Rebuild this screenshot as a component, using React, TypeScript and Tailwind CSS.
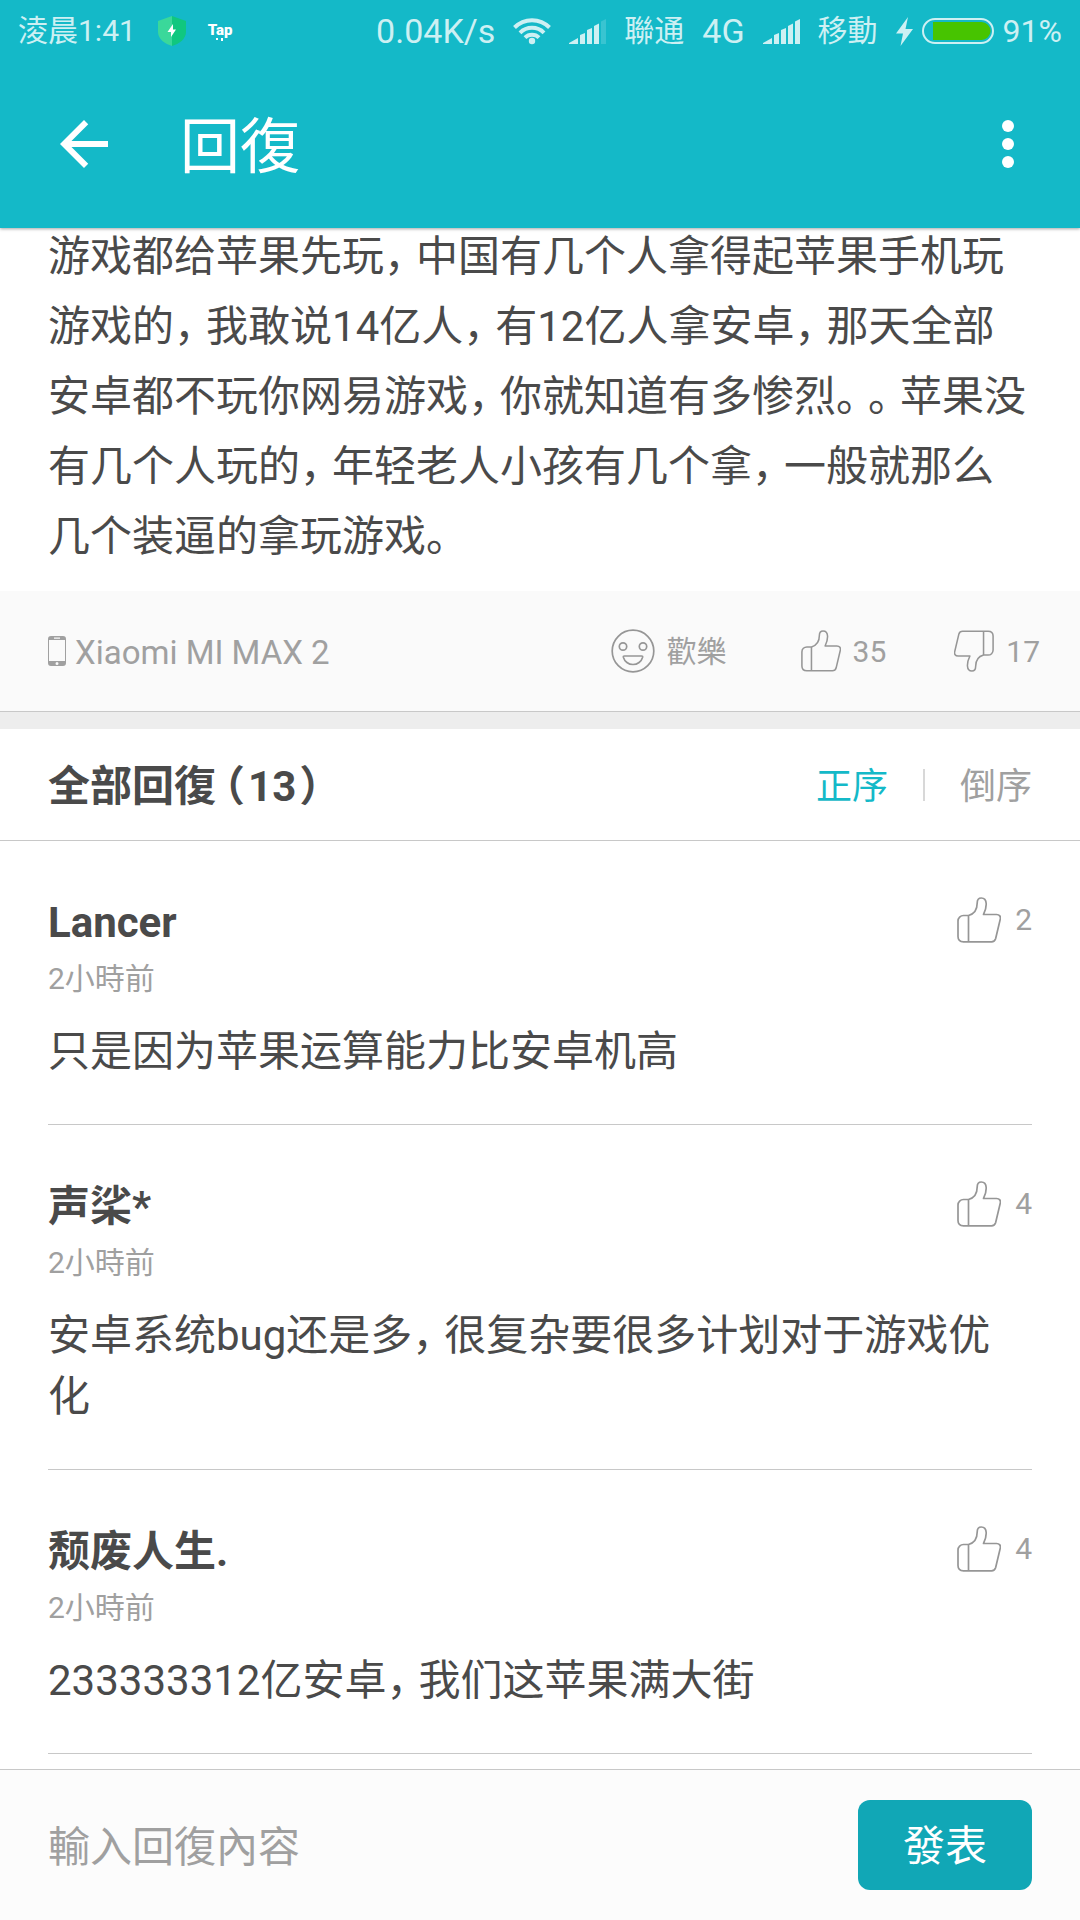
import type { ReactNode } from 'react';

const BODY_FONT = "font-['Roboto','Noto_Sans_CJK_SC',sans-serif]";

/** Sets full-width punctuation in a slightly narrower cell. */
function Punctuated({ text }: { text: string }) {
  return (
    <>
      {text.split(/([，。（）])/).map((part, i) => {
        if (part === '，' || part === '。') {
          return (
            <span key={i} className="mr-[11px] [font-feature-settings:'halt']">
              {part}
            </span>
          );
        }
        if (part === '（') {
          return (
            <span key={i} className="mr-[3px] ml-2 [font-feature-settings:'halt']">
              {part}
            </span>
          );
        }
        if (part === '）') {
          return (
            <span key={i} className="ml-[3px] [font-feature-settings:'halt']">
              {part}
            </span>
          );
        }
        return part;
      })}
    </>
  );
}

function ShieldIcon() {
  return (
    <svg viewBox="0 0 28 30" className="h-[30px] w-7" aria-hidden="true">
      <path d="M14 0 28 5V16C28 23 21 28 14 30Z" fill="#10c77f" />
      <path d="M14 0 0 5V16C0 23 7 28 14 30Z" fill="#3ad89a" />
      <path d="M15 8 9.5 16H13V21L18 13.5H15Z" fill="#fff" />
    </svg>
  );
}

function TapIcon() {
  return (
    <span className="flex flex-col items-center text-[15px] leading-4 font-black text-white">
      Tap
      <svg viewBox="0 0 8 3" className="h-[3px] w-2" aria-hidden="true">
        <path d="M0 0H2V2H0ZM5 0H7V3H5Z" fill="#fff" />
      </svg>
    </span>
  );
}

function WifiIcon() {
  return (
    <svg viewBox="0 0 38 28" className="h-7 w-[38px]" fill="none" aria-hidden="true">
      <g stroke="#cdf0f3" strokeWidth="4">
        <path d="M1.5 10.5A24.5 24.5 0 0 1 36.5 10.5" />
        <path d="M7 15.8A17 17 0 0 1 31 15.8" />
        <path d="M12 20.6A10 10 0 0 1 26 20.6" />
      </g>
      <circle cx="19" cy="24" r="3.2" fill="#cdf0f3" />
    </svg>
  );
}

function SignalIcon({ full }: { full: boolean }) {
  return (
    <svg viewBox="0 0 37 25" className="h-[25px] w-[37px]" fill="#cdf0f3" aria-hidden="true">
      <path d="M0 25V24L9 19V25Z" />
      <path d="M11 16 16 14V25H11Z" />
      <path d="M18 11 23 9V25H18Z" />
      <path d="M25 7 30 4.500V25H25Z" />
      <path d="M32 2.500 37 0V25H32Z" opacity={full ? 1 : 0.2} />
    </svg>
  );
}

function BatteryIcon() {
  return (
    <svg viewBox="0 0 72 26" className="h-[26px] w-[72px]" fill="none" aria-hidden="true">
      <rect x="1" y="1" width="70" height="24" rx="12" stroke="#cdf0f3" strokeWidth="2" />
      <path d="M11 4H59.500A9 9 0 0 1 59.500 22H11Z" fill="#47c400" />
    </svg>
  );
}

function BoltIcon() {
  return (
    <svg viewBox="0 0 17 29" className="h-[29px] w-[17px]" fill="#cdf0f3" aria-hidden="true">
      <path d="M12 0 0 16.500H7L4.500 29 17 12H9.500Z" />
    </svg>
  );
}

function ThumbIcon({ className }: { className: string }) {
  return (
    <svg
      viewBox="0 0 44 46"
      className={className}
      fill="none"
      stroke="#969696"
      strokeWidth="1.700"
      strokeLinejoin="round"
      aria-hidden="true"
    >
      <path d="M11.500 18.500H6.500C3.500 18.500 1 20.800 1 24V39.500C1 42.700 3.200 44.800 6.500 44.800H34.500C36.800 44.800 38 43.800 38.600 41.800L43.200 22.500C44 19.500 42.500 17.500 39.500 17.500H26.500C28 14.500 29.400 11 29.200 6.500C29 3 27 1 24.300 1C21.600 1 20.200 3 20.200 6C20.200 12.500 17 17 11.500 18.500Z" />
      <path d="M11.500 18.500V44.800" />
    </svg>
  );
}

function SmileIcon() {
  return (
    <svg
      viewBox="0 0 44 44"
      className="size-11"
      fill="none"
      stroke="#969696"
      strokeWidth="1.700"
      strokeLinejoin="round"
      aria-hidden="true"
    >
      <circle cx="22" cy="22" r="20.800" />
      <circle cx="12" cy="17.500" r="3.700" />
      <circle cx="32" cy="17.500" r="3.700" />
      <path d="M13.500 27H30.500C31.500 27 31.800 27.500 31.600 28.400C30.500 32.500 26.500 35.500 22 35.500S13.500 32.500 12.400 28.400C12.200 27.500 12.500 27 13.500 27Z" />
    </svg>
  );
}

function PhoneIcon() {
  return (
    <svg viewBox="0 0 18 30" className="h-[30px] w-[18px]" aria-hidden="true">
      <path
        fillRule="evenodd"
        fill="#a0a0a0"
        d="M3 0H15A3 3 0 0 1 18 3V27A3 3 0 0 1 15 30H3A3 3 0 0 1 0 27V3A3 3 0 0 1 3 0ZM1 4V25H17V4ZM6 1.500V2.700H12V1.500ZM9 26A1.500 1.500 0 1 0 9 29A1.500 1.500 0 1 0 9 26Z"
      />
    </svg>
  );
}

function StatusBar() {
  return (
    <div className="flex h-15 items-center justify-between px-[18px] pt-0.5 text-[30px] leading-9 text-[#cdf0f3]">
      <div className="flex items-center gap-[22px]">
        <span>淩晨1:41</span>
        <ShieldIcon />
        <TapIcon />
      </div>
      <div className="flex items-center gap-[18px]">
        <span className="text-[34px]">0.04K/s</span>
        <WifiIcon />
        <SignalIcon full={false} />
        <span>聯通</span>
        <span className="text-[34px]">4G</span>
        <SignalIcon full />
        <span>移動</span>
        <span className="flex items-center gap-[9px]">
          <BoltIcon />
          <BatteryIcon />
          <span className="text-[32px]">91%</span>
        </span>
      </div>
    </div>
  );
}

function AppBar() {
  return (
    <div className="flex h-42 items-center px-9">
      <button type="button" aria-label="返回" className="ml-3">
        <svg viewBox="0 0 24 24" className="size-18" fill="#fff" aria-hidden="true">
          <path d="M20 11H7.830l5.590-5.590L12 4l-8 8 8 8 1.410-1.410L7.830 13H20v-2z" />
        </svg>
      </button>
      <h1 className="ml-15 flex-1 pt-2 text-[60px] leading-[72px] font-normal text-white">回復</h1>
      <button type="button" aria-label="更多">
        <svg viewBox="0 0 24 24" className="size-18" fill="#fff" aria-hidden="true">
          <circle cx="12" cy="6" r="2" />
          <circle cx="12" cy="12" r="2" />
          <circle cx="12" cy="18" r="2" />
        </svg>
      </button>
    </div>
  );
}

function MetaButton({ icon, children, label }: { icon: ReactNode; children: ReactNode; label: string }) {
  return (
    <button type="button" aria-label={label} className="flex items-center gap-3 text-[30px] leading-9">
      {icon}
      <span className="pt-0.5">{children}</span>
    </button>
  );
}

type Reply = { name: string; time: string; text: string; likes: number };

const REPLIES: Reply[] = [
  { name: 'Lancer', time: '2小時前', text: '只是因为苹果运算能力比安卓机高', likes: 2 },
  { name: '声桬*', time: '2小時前', text: '安卓系统bug还是多，很复杂要很多计划对于游戏优化', likes: 4 },
  { name: '颓废人生.', time: '2小時前', text: '233333312亿安卓，我们这苹果满大街', likes: 4 },
];

function ReplyItem({ reply }: { reply: Reply }) {
  return (
    <li className="border-b border-[#c8c8c8] pt-[54px] pb-[42px]">
      <div className="flex items-start justify-between">
        <h3 className="text-[42px] leading-14 font-bold">{reply.name}</h3>
        <button
          type="button"
          aria-label="讚"
          className="mt-0.5 flex items-center gap-[14px] text-[30px] leading-9 text-[#a0a0a0]"
        >
          <ThumbIcon className="h-[46px] w-11" />
          {reply.likes}
        </button>
      </div>
      <p className="mt-[10px] text-[30px] leading-9 text-[#a0a0a0]">{reply.time}</p>
      <p className="mt-6 text-[42px] leading-[61px]">
        <Punctuated text={reply.text} />
      </p>
    </li>
  );
}

export default function App() {
  return (
    <div
      className={`flex min-h-screen flex-col bg-white text-[#4a4a4a] [text-spacing-trim:space-all] ${BODY_FONT}`}
    >
      <header className="relative z-10 bg-[#14b9c8] shadow-[0_1px_3px_rgba(0,0,0,0.35)]">
        <StatusBar />
        <AppBar />
      </header>

      <main className="flex-1">
        <article>
          <p className="-mt-1.5 px-12 pb-[19px] text-[42px] leading-[70px]">
            <Punctuated text="游戏都给苹果先玩，中国有几个人拿得起苹果手机玩游戏的，我敢说14亿人，有12亿人拿安卓，那天全部安卓都不玩你网易游戏，你就知道有多惨烈。。苹果没有几个人玩的，年轻老人小孩有几个拿，一般就那么几个装逼的拿玩游戏。" />
          </p>
          <div className="flex h-[121px] items-center justify-between border-b border-[#c8c8c8] bg-[#fafafa] pr-10 pl-12 text-[#a0a0a0]">
            <div className="flex items-center gap-[9px] text-[33px] leading-9">
              <PhoneIcon />
              <span className="pt-1">Xiaomi MI MAX 2</span>
            </div>
            <div className="flex items-center gap-[74px]">
              <MetaButton label="歡樂" icon={<SmileIcon />}>
                歡樂
              </MetaButton>
              <div className="flex items-center gap-[68px]">
                <MetaButton label="讚" icon={<ThumbIcon className="h-[42px] w-10" />}>
                  35
                </MetaButton>
                <MetaButton label="踩" icon={<ThumbIcon className="h-[42px] w-10 rotate-180" />}>
                  17
                </MetaButton>
              </div>
            </div>
          </div>
        </article>

        <section className="border-t-[17px] border-[#ededed]">
          <div className="flex h-28 items-center justify-between border-b border-[#c8c8c8] px-12">
            <h2 className="pt-1 text-[42px] leading-14 font-bold">
              <Punctuated text="全部回復（13）" />
            </h2>
            <div className="flex items-center gap-[35px] text-[36px] leading-11">
              <button type="button" className="pt-1 text-[#14b9c8]">
                正序
              </button>
              <span className="h-8 w-0.5 bg-[#d8d8d8]" />
              <button type="button" className="pt-1 text-[#a0a0a0]">
                倒序
              </button>
            </div>
          </div>
          <ul className="px-12">
            {REPLIES.map((reply) => (
              <ReplyItem key={reply.name} reply={reply} />
            ))}
          </ul>
        </section>
      </main>

      <form
        className="flex items-center border-t border-[#c8c8c8] bg-[#fcfcfc] px-12 py-[30px]"
        onSubmit={(e) => e.preventDefault()}
      >
        <input
          type="text"
          aria-label="輸入回復內容"
          placeholder="輸入回復內容"
          className="h-[90px] min-w-0 flex-1 bg-transparent pt-1 text-[42px] outline-none placeholder:text-[#a0a0a0]"
        />
        <button
          type="submit"
          className="h-[90px] rounded-xl bg-[#11a7b6] px-[45px] pt-1 text-[42px] leading-14 text-white"
        >
          發表
        </button>
      </form>
    </div>
  );
}
